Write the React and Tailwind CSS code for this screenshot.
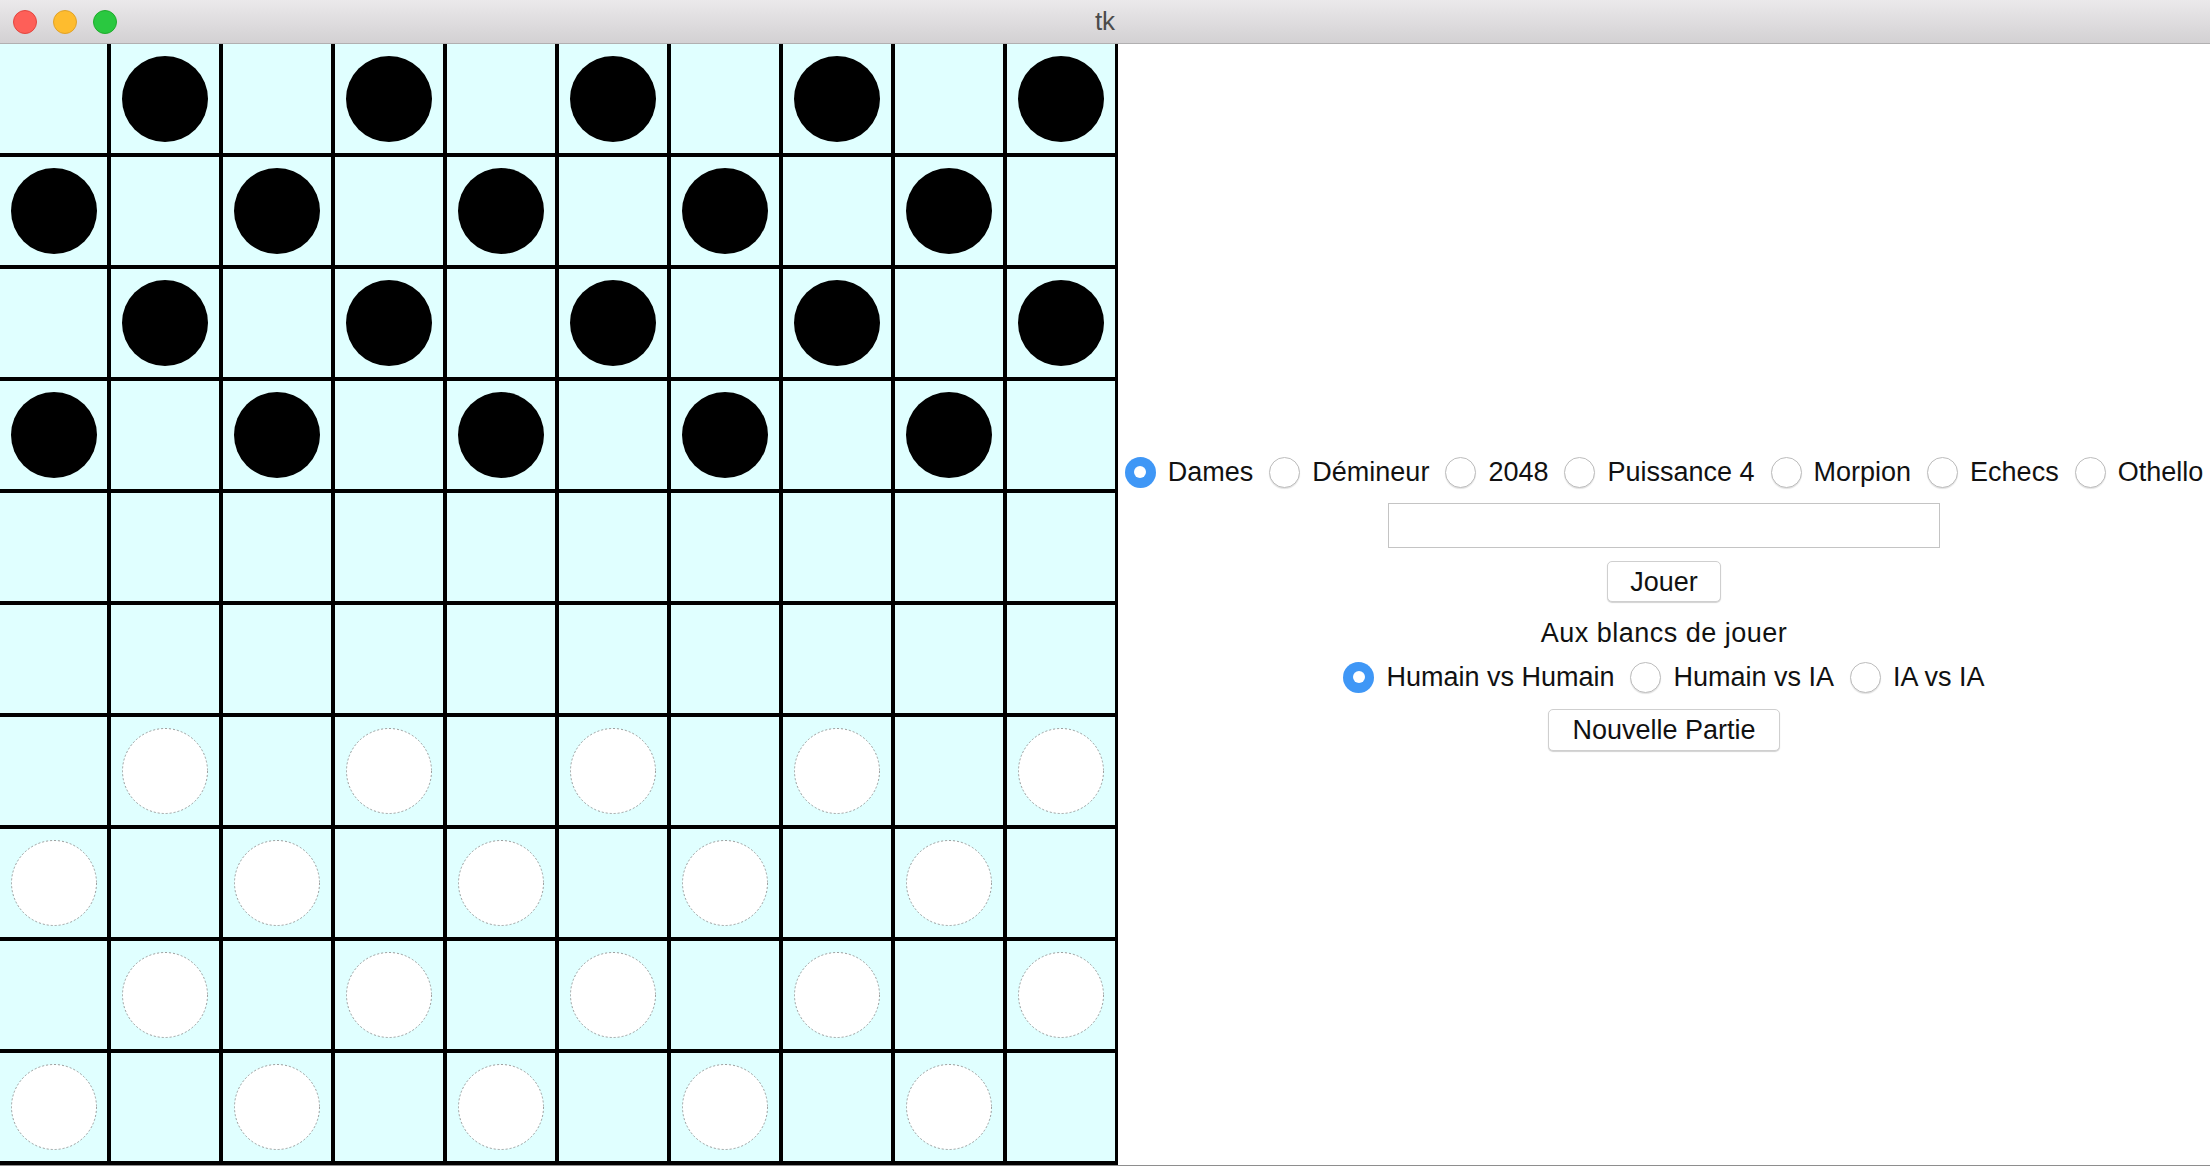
import { useState } from 'react';

const FONT = { fontFamily: '"Liberation Sans", Arial, sans-serif' };

const GAMES = ['Dames', 'Démineur', '2048', 'Puissance 4', 'Morpion', 'Echecs', 'Othello'];
const MODES = ['Humain vs Humain', 'Humain vs IA', 'IA vs IA'];

// board: black pieces on rows 0-3, white pieces on rows 6-9, dark squares where (r + c) is odd
function pieceAt(r, c) {
  if ((r + c) % 2 === 0) return null;
  if (r <= 3) return 'black';
  if (r >= 6) return 'white';
  return null;
}

function Piece({ color }) {
  if (color === 'black') {
    return <div className="w-[86px] h-[86px] rounded-full bg-black" />;
  }
  return (
    <svg width="86" height="86" viewBox="0 0 86 86">
      <circle cx="43" cy="43" r="42.5" fill="#ffffff" stroke="#9c9c9c" strokeWidth="1" strokeDasharray="2 2" />
    </svg>
  );
}

function Board() {
  const cells = [];
  for (let r = 0; r < 10; r++) {
    for (let c = 0; c < 10; c++) {
      const p = pieceAt(r, c);
      cells.push(
        <div key={`${r}-${c}`} className="bg-[#e0ffff] flex items-center justify-center">
          {p && <Piece color={p} />}
        </div>
      );
    }
  }
  return (
    <div className="shrink-0 grid grid-cols-[107px_repeat(9,108px)] grid-rows-[109px_repeat(9,108px)] gap-[4px] bg-black pr-[3px] pb-[4px] self-start">
      {cells}
    </div>
  );
}

function Radio({ checked, label, onClick }) {
  return (
    <button onClick={onClick} className="shrink-0 flex items-center gap-[12px] text-[27px] leading-[32px] text-[#111] whitespace-nowrap">
      {checked ? (
        <span className="shrink-0 w-[31px] h-[31px] rounded-full bg-[#3f97f6] flex items-center justify-center">
          <span className="w-[12px] h-[12px] rounded-full bg-white" />
        </span>
      ) : (
        <span className="shrink-0 w-[31px] h-[31px] rounded-full bg-white border border-[#bdbdbd] shadow-[0_1px_1px_rgba(0,0,0,0.12)]" />
      )}
      <span>{label}</span>
    </button>
  );
}

function MacButton({ children, className }) {
  return (
    <button
      className={`bg-white border border-[#cfcfcf] rounded-[5px] shadow-[0_1px_1px_rgba(0,0,0,0.18)] text-[27px] leading-[32px] text-[#111] whitespace-nowrap ${className || ''}`}
    >
      {children}
    </button>
  );
}

export default function App() {
  const [game, setGame] = useState('Dames');
  const [mode, setMode] = useState('Humain vs Humain');

  return (
    <div className="w-[2210px] h-[1166px] flex flex-col bg-white overflow-hidden" style={FONT}>
      {/* Title bar */}
      <div className="h-[44px] shrink-0 relative flex items-center justify-center bg-gradient-to-b from-[#ebe9eb] to-[#d3d1d3] border-b border-[#b1b0b1]">
        <div className="absolute left-[13px] top-[10px] flex gap-[16px]">
          <span className="w-[24px] h-[24px] rounded-full bg-[#fe5f58] border border-[#e2463f]" />
          <span className="w-[24px] h-[24px] rounded-full bg-[#febc2e] border border-[#e0a229]" />
          <span className="w-[24px] h-[24px] rounded-full bg-[#2ac840] border border-[#1fac2c]" />
        </div>
        <span className="text-[26px] text-[#4b4b4b]">tk</span>
      </div>

      <div className="flex-1 flex border-b border-[#8e8e8e]">
        <Board />

        {/* Controls */}
        <div className="flex-1 min-w-0 flex flex-col items-center justify-center pb-[2px]">
          <div className="flex items-center gap-[16px]">
            {GAMES.map((g) => (
              <Radio key={g} label={g} checked={game === g} onClick={() => setGame(g)} />
            ))}
          </div>
          <input
            type="text"
            className="mt-[15px] w-[552px] h-[45px] border border-[#c4c4c4] bg-white outline-none px-2 text-[24px]"
          />
          <MacButton className="mt-[13px] w-[114px] h-[41px]">Jouer</MacButton>
          <div className="mt-[15px] text-[27px] leading-[32px] text-[#111] tracking-[0.5px]">Aux blancs de jouer</div>
          <div className="mt-[12px] flex items-center gap-[16px]">
            {MODES.map((m) => (
              <Radio key={m} label={m} checked={mode === m} onClick={() => setMode(m)} />
            ))}
          </div>
          <MacButton className="mt-[16px] w-[232px] h-[42px]">Nouvelle Partie</MacButton>
        </div>
      </div>
    </div>
  );
}
